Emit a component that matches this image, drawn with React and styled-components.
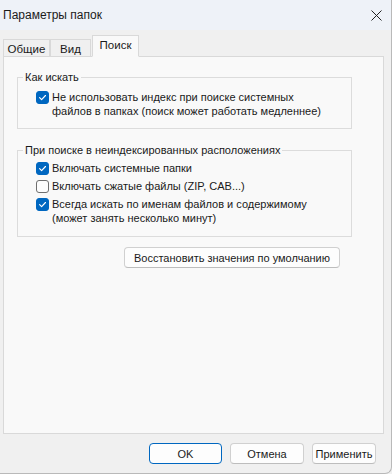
import React from 'react';
import styled, { createGlobalStyle } from 'styled-components';

const GlobalStyle = createGlobalStyle`
  html, body {
    margin: 0;
    padding: 0;
    background: #f0f0f0;
  }
  body {
    font-family: 'Liberation Sans', Arial, sans-serif;
    font-size: 11px;
    color: #1a1a1a;
  }
`;

const CheckIcon = () => (
  <svg width='9' height='9' viewBox='0 0 10 10'>
    <path d='M1.8 5.2 L4 7.3 L8.3 2.8' fill='none' stroke='#fff' strokeWidth='1.3' strokeLinecap='round' strokeLinejoin='round' />
  </svg>
);

const Check = ({ checked, lines }) => (
  <CheckRow>
    <Box checked={checked}>{checked && <CheckIcon />}</Box>
    <Label>
      {lines.map((l) => (
        <div key={l}>{l}</div>
      ))}
    </Label>
  </CheckRow>
);

const App = () => {
  return (
    <Window>
      <GlobalStyle />
      <TitleBar>
        <Title>Параметры папок</Title>
        <Close>
          <svg width='11' height='11' viewBox='0 0 11 11'>
            <path d='M0.5 0.5 L10.5 10.5 M10.5 0.5 L0.5 10.5' stroke='#222' strokeWidth='1' />
          </svg>
        </Close>
      </TitleBar>
      <Body>
        <Tabs>
          <Tab width={47}>Общие</Tab>
          <Tab width={41}>Вид</Tab>
          <Tab active width={47}>Поиск</Tab>
        </Tabs>
        <Panel>
          <Group top={6} bottom={10} gapBelow={14}>
            <Legend>Как искать</Legend>
            <Check
              checked
              lines={[
                'Не использовать индекс при поиске системных',
                'файлов в папках (поиск может работать медленнее)',
              ]}
            />
          </Group>
          <Group top={4} bottom={11} gapBelow={10}>
            <Legend>При поиске в неиндексированных расположениях</Legend>
            <Check checked lines={['Включать системные папки']} />
            <Check lines={['Включать сжатые файлы (ZIP, CAB...)']} />
            <Check
              checked
              lines={[
                'Всегда искать по именам файлов и содержимому',
                '(может занять несколько минут)',
              ]}
            />
          </Group>
          <RestoreButton>Восстановить значения по умолчанию</RestoreButton>
        </Panel>
        <Footer>
          <Button primary width={73}>OK</Button>
          <Button width={74}>Отмена</Button>
          <Button width={64}>Применить</Button>
        </Footer>
      </Body>
    </Window>
  );
};

export default App;

const Window = styled.div`
  width: 392px;
  height: 474px;
  box-sizing: border-box;
  display: flex;
  flex-direction: column;
  background: #f0f0f0;
  border-right: 1px solid #b9b9b9;
  border-bottom: 1px solid #b9b9b9;
  border-bottom-right-radius: 7px;
  overflow: hidden;
`;

const TitleBar = styled.div`
  height: 30px;
  flex: none;
  display: flex;
  align-items: center;
  justify-content: space-between;
  background: #eef2f8;
  padding: 0 6px 0 3px;
`;

const Title = styled.span`
  font-size: 12px;
  color: #1b1b1b;
`;

const Close = styled.span`
  display: flex;
  align-items: center;
  margin-right: 3px;
`;

const Body = styled.div`
  flex: 1;
  display: flex;
  flex-direction: column;
  padding: 4px 7px 0 3px;
`;

const Tabs = styled.div`
  display: flex;
  align-items: flex-end;
  height: 23px;
  position: relative;
  z-index: 1;
  margin-bottom: -1px;
`;

const Tab = styled.div`
  box-sizing: border-box;
  width: ${(p) => p.width}px;
  height: ${(p) => (p.active ? '22px' : '18px')};
  padding-top: 2px;
  text-align: center;
  font-size: 11.5px;
  line-height: 14px;
  background: ${(p) => (p.active ? '#f9f9f9' : '#f0f0f0')};
  border: 1px solid #d9d9d9;
  border-bottom-color: ${(p) => (p.active ? '#f9f9f9' : '#d9d9d9')};
  margin-left: ${(p) => (p.active ? '1px' : '0')};
  & + & {
    border-left: ${(p) => (p.active ? '1px solid #d9d9d9' : 'none')};
  }
`;

const Panel = styled.div`
  height: 378px;
  box-sizing: border-box;
  display: flex;
  flex-direction: column;
  background: #f9f9f9;
  border: 1px solid #d9d9d9;
  padding: 13px 31px 0 13px;
`;

const Group = styled.fieldset`
  margin: 0 0 ${(p) => p.gapBelow}px;
  border: 1px solid #dcdcdc;
  padding: ${(p) => p.top}px 0 ${(p) => p.bottom}px 18px;
  display: flex;
  flex-direction: column;
  gap: 4px;
  min-width: 0;
`;

const Legend = styled.legend`
  padding: 0 2px;
  margin-left: -13px;
  line-height: 14px;
`;

const CheckRow = styled.div`
  display: flex;
  align-items: flex-start;
  gap: 3px;
  line-height: 14px;
`;

const Box = styled.span`
  flex: none;
  box-sizing: border-box;
  width: 13px;
  height: 13px;
  margin-top: 1px;
  border-radius: 3px;
  display: flex;
  align-items: center;
  justify-content: center;
  background: ${(p) => (p.checked ? '#0067c0' : '#fdfdfd')};
  border: 1px solid ${(p) => (p.checked ? '#0067c0' : '#6f6f6f')};
`;

const Label = styled.div`
  color: #1a1a1a;
`;

const RestoreButton = styled.button`
  align-self: flex-end;
  margin-right: 12px;
  width: 216px;
  height: 21px;
  box-sizing: border-box;
  font: inherit;
  color: #1a1a1a;
  background: #fdfdfd;
  border: 1px solid #d0d0d0;
  border-bottom-color: #bdbdbd;
  border-radius: 4px;
  padding: 0;
`;

const Footer = styled.div`
  flex: 1;
  display: flex;
  justify-content: flex-end;
  align-items: flex-start;
  gap: 8px;
  padding: 9px 8px 0 0;
`;

const Button = styled.button`
  width: ${(p) => p.width}px;
  height: 21px;
  box-sizing: border-box;
  font: inherit;
  color: #1a1a1a;
  background: #fdfdfd;
  border: 1px solid ${(p) => (p.primary ? '#0067c0' : '#d0d0d0')};
  border-bottom-color: ${(p) => (p.primary ? '#0067c0' : '#bdbdbd')};
  border-radius: 4px;
  padding: 0;
`;
